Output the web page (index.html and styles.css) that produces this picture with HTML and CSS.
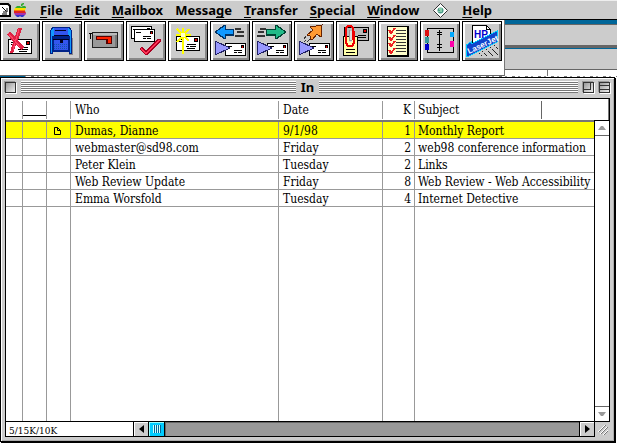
FILE: index.html
```
<!DOCTYPE html>
<html lang="en">
<head>
    <meta charset="UTF-8">
    <meta name="viewport" content="width=device-width, initial-scale=1.0">
    <title>In</title>
    <link rel="stylesheet" href="styles.css">
</head>
<body>
    <!-- small envelope shared by the toolbar icons -->
    <svg class="defs" width="0" height="0" aria-hidden="true">
        <symbol id="envelope" viewBox="0 0 24 15">
            <path fill="#000" d="M0 0h24v15H0z"/>
            <path fill="#fff" d="M1 1h22v13H1z"/>
            <path fill="#000" d="M3 3h5v1H3zM3 5h4v1H3zM18 2h4v4h-4zM11 8h9v1h-9zM10 10h3v1h-3zM14 10h6v1h-6zM11 12h8v1h-8z"/>
            <path fill="#d00" d="M19 3h2v2h-2z"/>
        </symbol>
        <symbol id="letter" viewBox="0 0 21 13">
            <path fill="#000" d="M0 0h21v13H0z"/>
            <path fill="#fff" d="M1 1h19v11H1z"/>
            <path fill="#000" d="M2 3h5v1H2zM16 2h3v3h-3zM9 7h8v1H9zM9 9h3v1H9zM13 9h4v1h-4z"/>
            <path fill="#d00" d="M17 3h1v2h-1z"/>
        </symbol>
    </svg>

    <nav class="menubar">
        <svg class="menu-script" width="11" height="14" viewBox="0 0 11 14">
            <path d="M0 1h8l2 2v10H0" fill="#fff" stroke="#000" stroke-width="2"/>
            <path d="M2 4l4 4M7 5v4H3M2 11h5" fill="none" stroke="#000"/>
        </svg>
        <svg class="menu-apple" width="14" height="15" viewBox="0 0 14 15">
            <path fill="#3a3" d="M7 3V1l2-1h1v1L8 3zM3 3h3l1 1 2-1h2l1 1v1H1z"/>
            <path fill="#fd0" d="M1 5h11l-1 2H0z"/>
            <path fill="#f70" d="M0 7h11v1H0z"/>
            <path fill="#d22" d="M0 8h11l1 2H0z"/>
            <path fill="#a3a" d="M0 10h12v1l-1 1H1z"/>
            <path fill="#33c" d="M1 12h10l-2 2H7l-1-1-1 1H3z"/>
        </svg>
        <button><u>F</u>ile</button>
        <button><u>E</u>dit</button>
        <button><u>M</u>ailbox</button>
        <button>Messa<u>g</u>e</button>
        <button><u>T</u>ransfer</button>
        <button><u>S</u>pecial</button>
        <button><u>W</u>indow</button>
        <button class="menu-scripts" aria-label="Scripts">
            <svg width="15" height="15" viewBox="0 0 15 15">
                <path d="M7.500.500l7 7-7 7-7-7z" fill="#fff" stroke="#333"/>
                <circle cx="7.500" cy="7.500" r="3" fill="#4a9a88"/>
                <path d="M6 6h3M8 7v2M6 8v1" stroke="#cfc" fill="none"/>
            </svg>
        </button>
        <button><u>H</u>elp</button>
    </nav>

    <div class="desk">
        <div class="toolbar">
            <button aria-label="Delete">
                <svg viewBox="1 1 38 38">
                    <use href="#envelope" x="8" y="18" width="24" height="15"/>
                    <path d="M7 13l3-3 5 6 3-9h4l-4 13 6 6-3 3-5-5-3 8h-3l3-11z" fill="#d24"/>
                    <path d="M8 12l12 14M19 8l-6 21" stroke="#f46" fill="none"/>
                </svg>
            </button>
            <button aria-label="In mailbox">
                <svg viewBox="1 1 38 38">
                    <path d="M27 17h4v17h-4z" fill="#888"/>
                    <path d="M8 33V10l2-4h18l2 4v23h-3v-2H11v2z" fill="#028"/>
                    <path d="M9 32V10l2-3h16l2 3v22h-1V15H10v17z" fill="#19f"/>
                    <path d="M12 7h14v8H12zM12 19h14v10H12z" fill="#35e"/>
                    <path d="M13 9h11v1H13zM12 14h15v1H12zM11 18h16v1H11zM18 19h3v3h-3z" fill="#002"/>
                    <path d="M12 23h14M12 25h14M12 27h14" stroke="#15a" stroke-dasharray="1 1"/>
                </svg>
            </button>
            <button aria-label="Out mailbox">
                <svg viewBox="1 1 38 38">
                    <path d="M5 12h4v1H7v5H6v-5H5z" fill="#000"/>
                    <path d="M8 11h26v16H8z" fill="#222"/>
                    <path d="M9 12h24v14H9z" fill="#999"/>
                    <path d="M9 12h24v2H9z" fill="#bbb"/>
                    <path d="M31 14h2v12h-2z" fill="#777"/>
                    <path d="M12 15h16v8h-6v-4H12z" fill="#500"/>
                    <path d="M13 16h14v6h-3v-4H13z" fill="#f20"/>
                </svg>
            </button>
            <button aria-label="Check mail">
                <svg viewBox="1 1 38 38">
                    <use href="#letter" x="5" y="5" width="21" height="13"/>
                    <use href="#letter" x="8" y="8" width="21" height="13"/>
                    <path d="M13 28l3-2 4 4 11-12h4v2L21 34h-2z" fill="#a02"/>
                    <path d="M14 28l2-1 4 5 12-13h2L21 33h-2z" fill="#f35"/>
                </svg>
            </button>
            <button aria-label="New message">
                <svg viewBox="1 1 38 38">
                    <use href="#envelope" x="8" y="15" width="24" height="15"/>
                    <path d="M15 7v26M8 14h15M9 8l12 12M21 8L9 21" stroke="#ff0" stroke-width="2" fill="none"/>
                    <path d="M13 12h4v4h-4z" fill="#ffc"/>
                </svg>
            </button>
            <button aria-label="Reply">
                <svg viewBox="1 1 38 38">
                    <path d="M4 11l10-7h2v4h8v7h-8v3h-2z" fill="#036"/>
                    <path d="M6 11l9-6v4h8v4h-8v4z" fill="#19f"/>
                    <path d="M25 7h6v2h-6zM27 10h7v2h-7zM25 14h9v2h-9z" fill="#333"/>
                    <use href="#letter" x="15" y="22" width="21" height="13"/>
                    <path d="M5 20l15 7-15 7z" fill="#99f" stroke="#226"/>
                </svg>
            </button>
            <button aria-label="Forward">
                <svg viewBox="1 1 38 38">
                    <path d="M35 11L25 4h-2v4h-9v7h9v3h2z" fill="#043"/>
                    <path d="M33 11l-9-6v4h-9v4h9v4z" fill="#2b8"/>
                    <path d="M8 7h6v2H8zM6 10h6v2H6zM5 14h8v2H5z" fill="#333"/>
                    <use href="#letter" x="15" y="22" width="21" height="13"/>
                    <path d="M5 20l15 7-15 7z" fill="#99f" stroke="#226"/>
                </svg>
            </button>
            <button aria-label="Redirect">
                <svg viewBox="1 1 38 38">
                    <path d="M28 4l-1 12-4-3-5 6-2-1v-3l-3-1 6-5-3-3z" fill="#f93" stroke="#620"/>
                    <path d="M12 15l-2 3M16 18l-3 3M12 19l-2 2" stroke="#333" fill="none"/>
                    <use href="#letter" x="15" y="22" width="21" height="13"/>
                    <path d="M5 20l15 7-15 7z" fill="#99f" stroke="#226"/>
                </svg>
            </button>
            <button aria-label="Attach">
                <svg viewBox="1 1 38 38">
                    <path d="M8 6h25v14H8z" fill="#000"/>
                    <path d="M9 7h23v12H9z" fill="#bbb"/>
                    <path d="M27 8h4v4h-4zM22 14h8v1h-8zM22 16h8v1h-8z" fill="#000"/>
                    <path d="M28 9h2v2h-2z" fill="#d00"/>
                    <path d="M7 15h15v20H7z" fill="#000"/>
                    <path d="M8 16h13v18H8z" fill="#ffa"/>
                    <path d="M10 28h9v1h-9zM10 31h9v1h-9z" fill="#000"/>
                    <path d="M13 10h3v11h-3z" fill="#ddd"/>
                    <path d="M18 10v12l-2 3h-4l-2-3V7l2-2h3l2 2v12" stroke="#e00" stroke-width="2" fill="none"/>
                    <path d="M13 9v10h3" stroke="#999" fill="none"/>
                </svg>
            </button>
            <button aria-label="Filters">
                <svg viewBox="1 1 38 38">
                    <path d="M9 5h22v31H9z" fill="#000"/>
                    <path d="M10 6h19v28H10z" fill="#ffc"/>
                    <path d="M18 9h10M18 12h10M18 15h10M18 18h10M18 21h10M18 24h10M18 27h10M18 30h10" stroke="#333"/>
                    <path d="M11 9l2 3 4-5M11 16l2 3 4-5M11 22l2 3 4-5M11 29l2 3 4-5" stroke="#e22" stroke-width="2" fill="none"/>
                </svg>
            </button>
            <button aria-label="Address book">
                <svg viewBox="1 1 38 38">
                    <path d="M7 7h11l2 1 2-1h11v24H22l-2 1-2-1H7z" fill="#ccc" stroke="#000"/>
                    <path d="M19 9v21M17 11h5M17 13h5M17 23h5M17 26h5" stroke="#000" fill="none"/>
                    <path d="M5 9h4v6H5z" fill="#d11"/>
                    <path d="M5 16h4v6H5z" fill="#399"/>
                    <path d="M5 23h4v6H5z" fill="#00c"/>
                    <path d="M30 11h4v5h-4z" fill="#0af"/>
                    <path d="M30 20h4v6h-4z" fill="#f0a"/>
                </svg>
            </button>
            <button aria-label="Print">
                <svg viewBox="1 1 38 38">
                    <path d="M10.500 26V4.500h14l4 4V20" fill="#fff" stroke="#000"/>
                    <path d="M24.500 4.500v4h4" fill="none" stroke="#000"/>
                    <path d="M12 34l24-13v14H12z" fill="#ccc"/>
                    <path d="M17 32l3 3M20 30l5 5M24 28l7 7M28 26l8 8M32 24l4 4" stroke="#222" stroke-dasharray="2 1"/>
                    <path d="M4 24l5-3v2L35 10v11L5 36z" fill="#14c" stroke="#0cf"/>
                    <text x="12" y="17" class="icon-hp">HP</text>
                    <text x="7" y="33" class="icon-jet" transform="rotate(-25 7 33)">LaserJet</text>
                </svg>
            </button>
        </div>
        <div class="behind">
            <div class="behind-title"></div>
            <div class="behind-bar"></div>
            <div class="behind-page"></div>
        </div>
    </div>
    <div class="sliver"></div>

    <main class="window">
        <header class="titlebar">
            <div class="title-side">
                <button class="box close" aria-label="Close"></button>
                <div class="stripes"></div>
            </div>
            <h1>In</h1>
            <div class="title-side">
                <div class="stripes"></div>
                <button class="box zoom" aria-label="Zoom"></button>
                <button class="box collapse" aria-label="Collapse"></button>
            </div>
        </header>

        <div class="pane">
            <table class="mail">
                <colgroup>
                    <col class="c-status">
                    <col class="c-mark">
                    <col class="c-mark">
                    <col class="c-who">
                    <col class="c-date">
                    <col class="c-size">
                    <col class="c-subject">
                    <col>
                </colgroup>
                <thead>
                    <tr>
                        <th><div></div></th>
                        <th><div class="priority"></div></th>
                        <th><div></div></th>
                        <th><div>Who</div></th>
                        <th><div>Date</div></th>
                        <th class="num"><div>K</div></th>
                        <th><div class="dark">Subject</div></th>
                        <th></th>
                    </tr>
                </thead>
                <tbody>
                    <tr class="selected">
                        <td></td><td></td>
                        <td class="mark">
                            <svg width="7" height="8" viewBox="0 0 7 8"><path d="M.500.500h3l3 3v4h-6zM3.500.500v3h3" fill="none" stroke="#000"/></svg>
                        </td>
                        <td>Dumas, Dianne</td><td>9/1/98</td><td class="num">1</td><td colspan="2">Monthly Report</td>
                    </tr>
                    <tr>
                        <td></td><td></td><td></td>
                        <td>webmaster@sd98.com</td><td>Friday</td><td class="num">2</td><td colspan="2">web98 conference information</td>
                    </tr>
                    <tr>
                        <td></td><td></td><td></td>
                        <td>Peter Klein</td><td>Tuesday</td><td class="num">2</td><td colspan="2">Links</td>
                    </tr>
                    <tr>
                        <td></td><td></td><td></td>
                        <td>Web Review Update</td><td>Friday</td><td class="num">8</td><td colspan="2">Web Review - Web Accessibility</td>
                    </tr>
                    <tr>
                        <td></td><td></td><td></td>
                        <td>Emma Worsfold</td><td>Tuesday</td><td class="num">4</td><td colspan="2">Internet Detective</td>
                    </tr>
                    <tr class="rest">
                        <td></td><td></td><td></td><td></td><td></td><td></td><td colspan="2"></td>
                    </tr>
                </tbody>
            </table>
            <div class="side">
                <div class="corner"></div>
                <div class="vscroll">
                    <button aria-label="Scroll up"><svg width="8" height="4" viewBox="0 0 8 4"><path d="M3 0h2l3 4H0z"/></svg></button>
                    <button aria-label="Scroll down"><svg width="8" height="4" viewBox="0 0 8 4"><path d="M3 4h2l3-4H0z"/></svg></button>
                </div>
            </div>
        </div>

        <footer class="bottom">
            <div class="size">5/15K/10K</div>
            <div class="hscroll">
                <button aria-label="Scroll left"><svg width="5" height="8" viewBox="0 0 5 8"><path d="M5 0v8L0 4z"/></svg></button>
                <button class="thumb" aria-label="Scroll position"></button>
                <div class="track"></div>
                <button aria-label="Scroll right"><svg width="5" height="8" viewBox="0 0 5 8"><path d="M0 0v8l5-4z"/></svg></button>
            </div>
            <svg class="grip" width="15" height="15" viewBox="0 0 15 15">
                <path d="M3 10l7-7M5 12l7-7M8 13l5-5" stroke="#fff" fill="none"/>
                <path d="M4 10l7-7M6 12l7-7M9 13l4-4" stroke="#777" fill="none"/>
            </svg>
        </footer>
    </main>
</body>
</html>
```

FILE: styles.css
```
* {
    margin: 0;
    padding: 0;
    border: 0;
    box-sizing: border-box;
}
html, body { height: 100%; }
body {
    display: flex;
    flex-direction: column;
    background: #fff;
    color: #000;
    font-family: "DejaVu Serif Condensed", "DejaVu Serif", serif;
    font-size: 12px;
    overflow: hidden;
}
button {
    background: #ccc;
    color: #000;
}
svg { display: block; }
.defs { position: absolute; }

/* menu bar */
.menubar {
    display: flex;
    align-items: center;
    flex: none;
    gap: 12px;
    height: 20px;
    background: #ccc;
    border-top: 1px solid #eee;
    border-bottom: 1px solid #000;
}
.menubar button {
    font: bold 13px/17px "Noto Sans", sans-serif;
}
.menubar u {
    text-decoration-thickness: 1px;
    text-underline-offset: 2px;
    text-decoration-skip-ink: none;
}
.menu-apple { margin-left: -9px; }
.menubar .menu-scripts { margin: 0 2px; }

/* toolbar, with the other windows showing to its right */
.desk {
    display: flex;
    flex: none;
    height: 56px;
}
.toolbar {
    display: flex;
    align-items: flex-start;
    gap: 2px;
    padding: 1px 2px 0 0;
    background: #fff;
    border-right: 1px solid #777;
    border-bottom: 1px solid #666;
}
.toolbar button {
    width: 40px;
    height: 40px;
    border: 1px solid #000;
    box-shadow: inset 2px 2px #fff, inset -2px -2px #888;
}
.toolbar svg {
    width: 38px;
    height: 38px;
    shape-rendering: crispEdges;
}
.icon-hp {
    font: bold 10px "Liberation Sans", sans-serif;
    fill: #00c;
}
.icon-jet {
    font: bold 8px "Liberation Sans", sans-serif;
    fill: #fff;
}
.behind {
    flex: 1;
    display: flex;
    flex-direction: column;
}
.behind-title {
    height: 28px;
    background: #ccc;
    border-top: 4px solid #069;
    border-bottom: 3px solid #666;
    box-shadow: inset 0 1px #666;
}
.behind-bar {
    height: 22px;
    background: #ccc;
    border-top: 1px solid #069;
    border-bottom: 1px solid #666;
}
.behind-page {
    flex: 1;
    width: 43px;
    border-right: 1px solid #777;
}
.sliver {
    flex: none;
    height: 1px;
    background: linear-gradient(90deg, #069 25px, transparent 25px), repeating-linear-gradient(90deg, #fff 0 5px, #777 5px 8px, #fff 8px 11px, #999 11px 13px);
}

/* mailbox window */
.window {
    flex: 1;
    min-height: 0;
    display: flex;
    flex-direction: column;
    margin: 0 2px 1px 0;
    padding: 0 4px 4px;
    background: #ccc;
    border: 1px solid #000;
    box-shadow: inset 1px 1px #fff, inset -1px -1px #aaa, 1px 1px #000;
}
.titlebar {
    display: flex;
    align-items: center;
    flex: none;
    gap: 5px;
    height: 20px;
    padding-bottom: 2px;
}
.titlebar h1 {
    font: bold 13px/16px "Noto Sans", sans-serif;
}
.title-side {
    flex: 1;
    display: flex;
    align-items: center;
    gap: 5px;
}
.stripes {
    flex: 1;
    height: 12px;
    background: repeating-linear-gradient(#fff 0 1px, #777 1px 2px);
}
.box {
    width: 11px;
    height: 11px;
    border: 1px solid #333;
    background: linear-gradient(135deg, #999, #eee);
    box-shadow: 1px 1px #fff, -1px -1px #999;
}
.zoom, .collapse {
    display: flex;
    align-items: center;
}
.zoom { align-items: flex-start; }
.zoom::before {
    content: "";
    width: 6px;
    height: 6px;
    border: solid #333;
    border-width: 0 1px 1px 0;
}
.collapse::before {
    content: "";
    flex: 1;
    height: 3px;
    border: solid #333;
    border-width: 1px 0;
}
.pane {
    flex: 1;
    min-height: 0;
    display: flex;
    background: #fff;
    border: 1px solid #000;
}

/* message list */
.mail {
    flex: 1;
    width: 100%;
    min-width: 0;
    height: 100%;
    table-layout: fixed;
    border-spacing: 0;
}
.c-status { width: 17px; }
.c-mark { width: 24px; }
.c-who { width: 208px; }
.c-date { width: 104px; }
.c-size { width: 32px; }
.c-subject { width: 127px; }
.mail th {
    height: 23px;
    border-bottom: 2px solid #777;
    font-weight: normal;
    text-align: left;
}
.mail th div {
    height: 18px;
    padding-left: 4px;
    border-right: 1px solid #999;
    line-height: 18px;
}
.mail th .dark {
    padding-left: 3px;
    border-color: #666;
}
.mail th .priority::before {
    content: "";
    display: block;
    height: 14px;
    margin-left: -4px;
    border-bottom: 1px solid #000;
}
.mail td {
    height: 17px;
    padding: 2px 0 0 4px;
    border-right: 1px solid #999;
    border-bottom: 1px solid #999;
    line-height: 14px;
    white-space: nowrap;
    overflow: hidden;
}
.mail td:last-child {
    padding-left: 3px;
    border-right: 0;
}
.mail .num {
    padding-left: 0;
    padding-right: 3px;
    text-align: right;
}
.mail th.num { padding: 0; }
.mail .num div { padding-right: 3px; }
.mail .mark { padding-left: 7px; }
.selected { background: #ff0; }
.mail .rest td {
    height: auto;
    border-bottom: 0;
}
.side {
    flex: none;
    width: 15px;
    display: flex;
    flex-direction: column;
}
.corner {
    height: 21px;
    border-right: 1px solid #777;
}
.vscroll {
    flex: 1;
    display: flex;
    flex-direction: column;
    justify-content: space-between;
    border-top: 1px solid #000;
    border-left: 1px solid #000;
}
.vscroll button {
    display: flex;
    align-items: center;
    justify-content: center;
    height: 15px;
    background: #fff;
    border-bottom: 1px solid #666;
    fill: #999;
}
.vscroll button:last-child {
    border-top: 1px solid #666;
    border-bottom: 0;
}

/* status and horizontal scroll bar */
.bottom {
    flex: none;
    display: flex;
    height: 15px;
}
.size {
    width: 129px;
    padding-left: 3px;
    background: #fff;
    border: solid #000;
    border-width: 0 1px 1px;
    font-size: 10px;
    line-height: 18px;
}
.hscroll {
    flex: 1;
    display: flex;
    border: solid #000;
    border-width: 0 1px 1px 0;
}
.hscroll button {
    display: flex;
    align-items: center;
    justify-content: center;
    width: 15px;
    border-right: 1px solid #000;
    box-shadow: inset 1px 1px #fff;
}
.hscroll button:last-child {
    width: 14px;
    border-right: 0;
}
.hscroll .thumb {
    width: 16px;
    background: #0cf;
    box-shadow: inset 1px 1px #9ff;
}
.thumb::before {
    content: "";
    width: 8px;
    height: 8px;
    background: repeating-linear-gradient(90deg, #cff 0 1px, #069 1px 2px);
}
.track {
    flex: 1;
    background: #999;
    border-right: 1px solid #000;
    box-shadow: inset 1px 1px #666;
}
.grip { flex: none; }
```
